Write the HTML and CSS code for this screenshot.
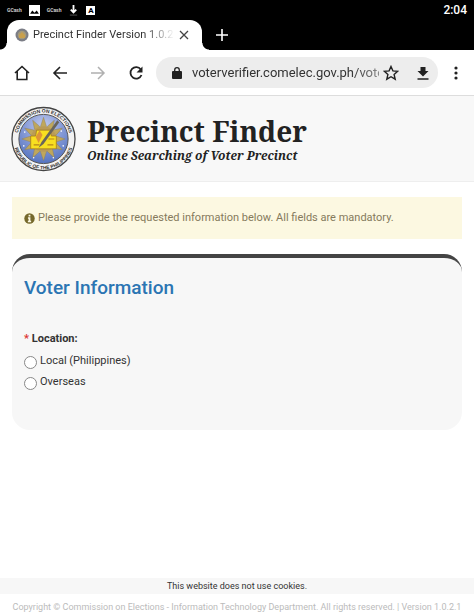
FILE: index.html
```html
<!DOCTYPE html>
<html lang="en">
<head>
<meta charset="utf-8">
<meta name="viewport" content="width=device-width, initial-scale=1">
<title>Precinct Finder Version 1.0.2.1</title>
<link rel="stylesheet" href="styles.css">
</head>
<body>
<div class="browser">
  <div class="status">
    <span class="brand">GCash</span>
    <svg class="status-icon" viewBox="0 0 10 10"><path fill="#fff" d="M0 0h10v10H0z"/><path d="M1 8l2-3 2 2 2-2 2 3z"/></svg>
    <span class="brand">GCash</span>
    <svg class="status-icon" viewBox="0 0 10 12"><path d="M5 0v7M2 5l3 3 3-3" fill="none" stroke="#fff" stroke-width="2"/><path d="M1 11h8" stroke="#555"/></svg>
    <span class="letter">A</span>
    <time class="clock">2:04</time>
  </div>
  <div class="tabs">
    <div class="tab">
      <svg class="favicon" viewBox="0 0 14 14"><circle cx="7" cy="7" r="6.5" fill="#7b7d86"/><circle cx="7" cy="7" r="4.3" fill="#a49a7c"/><path d="M4 7l3-3 3 3v3H4z" fill="#c9a04d"/></svg>
      <span class="tab-title">Precinct Finder Version 1.0.2</span>
      <button class="plain" aria-label="Close tab"><svg class="close" viewBox="0 0 10 10"><path d="M1 1l8 8M9 1L1 9" fill="none" stroke="#444" stroke-width="1.3"/></svg></button>
    </div>
    <button class="plain new-tab" aria-label="New tab"><svg class="plus" viewBox="0 0 12 12"><path d="M6 0v12M0 6h12" stroke="#fff" stroke-width="1.6"/></svg></button>
  </div>
  <div class="toolbar">
    <button class="plain" aria-label="Home"><svg class="icon" viewBox="0 0 16 16"><path d="M1 8l7-6.5L15 8M3.2 6.5v8h9.6v-8" fill="none" stroke="#222" stroke-width="1.6"/></svg></button>
    <button class="plain" aria-label="Back"><svg class="icon" viewBox="0 0 16 16"><path d="M15 8H2.5M8 2L2 8l6 6" fill="none" stroke="#222" stroke-width="1.6"/></svg></button>
    <button class="plain" aria-label="Forward" disabled><svg class="icon" viewBox="0 0 16 16"><path d="M1 8h12.5M8 2l6 6-6 6" fill="none" stroke="#b0b0b0" stroke-width="1.5"/></svg></button>
    <button class="plain" aria-label="Reload"><svg class="icon" viewBox="0 0 16 16"><path d="M12.8 4.5A5.7 5.7 0 1 0 13.5 10" fill="none" stroke="#222" stroke-width="1.8"/><path d="M14.5 1.5v6h-6z" fill="#222"/></svg></button>
    <div class="address">
      <svg class="lock" viewBox="0 0 10 12"><rect x="0" y="4" width="10" height="8" rx="1" fill="#222"/><path d="M2.7 5V3a2.300 2.300 0 0 1 4.600 0v2" fill="none" stroke="#222" stroke-width="1.300"/></svg>
      <input class="url" type="text" aria-label="Address" value="voterverifier.comelec.gov.ph/vote">
      <button class="plain" aria-label="Bookmark"><svg class="icon" viewBox="0 0 16 16"><path d="M8 1.5l1.900 4.400 4.800.4-3.600 3.200 1.100 4.700L8 11.700l-4.200 2.500 1.100-4.700L1.300 6.300l4.800-.4z" fill="none" stroke="#222" stroke-width="1.4"/></svg></button>
      <button class="plain" aria-label="Download"><svg class="icon" viewBox="0 0 16 16"><path d="M5.500 2h5v4h3L8 11.500 2.500 6h3zM2.500 13.200h11v1.500h-11z" fill="#222"/></svg></button>
    </div>
    <button class="plain" aria-label="More"><svg class="dots" viewBox="0 0 4 14"><g fill="#222"><circle cx="2" cy="2" r="1.600"/><circle cx="2" cy="7" r="1.600"/><circle cx="2" cy="12" r="1.600"/></g></svg></button>
  </div>
</div>

<header class="masthead">
  <svg class="seal" viewBox="0 0 66 66" role="img" aria-label="Commission on Elections seal">
    <defs>
      <radialGradient id="sky" cx=".5" cy=".25" r=".8">
        <stop offset="0" stop-color="#c3cdf0"/><stop offset=".5" stop-color="#8499d6"/><stop offset="1" stop-color="#4f6fbd"/>
      </radialGradient>
      <path id="arc-top" d="M10.300 47A26.700 26.700 0 1 1 55.700 47"/>
      <path id="arc-bottom" d="M3.400 25A30.700 30.700 0 1 0 62.600 25"/>
    </defs>
    <circle cx="33" cy="33" r="32" fill="#f2f2f2" stroke="#444" stroke-width="1.3"/>
    <circle cx="33" cy="33" r="25" fill="url(#sky)" stroke="#555" stroke-width="1"/>
    <g fill="#bfa75c" stroke="#85795a" stroke-width=".4">
      <g id="rays">
        <path d="M33 11l3 9-3 6-3-6zM33 55l3-9-3-6-3 6z"/>
        <path d="M11 33l9-3 6 3-6 3zM55 33l-9-3-6 3 6 3z"/>
      </g>
      <use href="#rays" transform="rotate(30 33 33)"/>
      <use href="#rays" transform="rotate(60 33 33)"/>
    </g>
    <circle cx="33" cy="33" r="13" fill="#b99b57"/>
    <path d="M20 30h5l1-6h14l1 6h5v13H20z" fill="#f8df20" stroke="#a47c1c" stroke-width=".8"/>
    <path d="M25 31l4-7 3 5-4 8z" fill="#de9437"/>
    <path d="M38 33h6M23 39h6M37 39h6" stroke="#b5841c" stroke-width="1.2"/>
    <path d="M47 14L31 36l-3 6 5-4 16-22z" fill="#68645b"/>
    <g fill="#fff"><circle cx="14" cy="26" r=".8"/><circle cx="51" cy="25" r=".8"/><circle cx="13" cy="40" r=".8"/><circle cx="53" cy="40" r=".8"/><circle cx="23" cy="52" r=".8"/><circle cx="43" cy="52" r=".8"/></g>
    <g class="seal-text">
      <text><textPath href="#arc-top" startOffset="50%" text-anchor="middle">COMMISSION ON ELECTIONS</textPath></text>
      <text><textPath href="#arc-bottom" startOffset="50%" text-anchor="middle">REPUBLIC OF THE PHILIPPINES</textPath></text>
    </g>
  </svg>
  <div>
    <h1>Precinct Finder</h1>
    <p class="tagline">Online Searching of Voter Precinct</p>
  </div>
</header>

<main>
  <p class="notice">
    <svg class="info" viewBox="0 0 12 12"><circle cx="6" cy="6" r="5.700" fill="#75682b"/><path d="M5 2h2v1.700H5zM4.300 4.700H7V8.500h.8V10H4.200V8.500H5V6.200h-.7z" fill="#fcf8e3"/></svg>
    <span>Please provide the requested information below. All fields are mandatory.</span>
  </p>
  <form class="panel">
    <h2>Voter Information</h2>
    <fieldset>
      <legend><span class="required">*</span> Location:</legend>
      <label class="choice"><input type="radio" name="location">Local (Philippines)</label>
      <label class="choice"><input type="radio" name="location">Overseas</label>
    </fieldset>
  </form>
</main>

<footer>
  <p class="cookies">This website does not use cookies.</p>
  <p class="copyright">Copyright © Commission on Elections - Information Technology Department. All rights reserved. | Version 1.0.2.1</p>
</footer>
</body>
</html>
```
FILE: styles.css
```css
* { box-sizing: border-box; }

body {
  margin: 0;
  min-height: 100vh;
  display: flex;
  flex-direction: column;
  background: #fff;
  color: #333;
  font: 11px/16px Roboto, sans-serif;
}

h1, h2, p, fieldset, legend { margin: 0; padding: 0; border: 0; }
svg { display: block; flex: none; }

.plain {
  display: flex;
  padding: 0;
  border: 0;
  background: none;
}

/* Browser chrome */
.status {
  display: flex;
  align-items: center;
  gap: 7px;
  height: 20px;
  padding: 0 7px;
  background: #000;
  color: #fff;
}
.brand { font-size: 5px; line-height: 8px; font-weight: 700; color: #ccc; }
.status-icon { width: 11px; height: 11px; }
.letter {
  width: 9px;
  background: #fff;
  color: #000;
  font-size: 8px;
  font-weight: 700;
  line-height: 9px;
  text-align: center;
}
.clock { margin-left: auto; font-size: 12px; font-weight: 500; }

.tabs {
  display: flex;
  align-items: stretch;
  height: 30px;
  padding-left: 7px;
  background: #000;
}
.tab {
  position: relative;
  display: flex;
  align-items: center;
  gap: 4px;
  width: 195px;
  padding: 0 13px 0 8px;
  border-radius: 12px 12px 0 0;
  background: #fff;
}
.tab::before, .tab::after {
  content: "";
  position: absolute;
  bottom: 0;
  width: 7px;
  height: 7px;
}
.tab::before { right: 100%; background: radial-gradient(circle at 0 0, #000 6px, #fff 7px); }
.tab::after { left: 100%; background: radial-gradient(circle at 100% 0, #000 6px, #fff 7px); }
.favicon { width: 14px; height: 14px; }
.tab-title {
  flex: 1;
  overflow: hidden;
  white-space: nowrap;
  color: #333;
  -webkit-mask-image: linear-gradient(90deg, #000 78%, transparent);
  mask-image: linear-gradient(90deg, #000 78%, transparent);
}
.close { width: 10px; height: 10px; }
.new-tab { align-items: center; margin-left: 14px; }
.plus { width: 12px; height: 12px; }

.toolbar {
  display: flex;
  align-items: center;
  gap: 22px;
  height: 46px;
  padding: 0 16px 0 14px;
  border-bottom: 1px solid #ddd;
}
.icon { width: 16px; height: 16px; }
.address {
  flex: 1;
  min-width: 0;
  display: flex;
  align-items: center;
  gap: 16px;
  height: 31px;
  margin: 0 -6px 0 -10px;
  padding: 0 7px 0 16px;
  border-radius: 16px;
  background: #ededed;
}
.lock { width: 10px; height: 12px; margin-right: -6px; }
.url {
  flex: 1;
  min-width: 0;
  padding: 0;
  border: 0;
  margin-right: -12px;
  background: none;
  color: #333;
  font: 13px/20px Roboto, sans-serif;
  -webkit-mask-image: linear-gradient(90deg, #000 85%, #0008);
  mask-image: linear-gradient(90deg, #000 85%, #0008);
}
.dots { width: 4px; height: 14px; }

/* Page */
.masthead {
  display: flex;
  align-items: center;
  gap: 11px;
  height: 86px;
  padding: 0 11px;
  border-bottom: 1px solid #eee;
  background: #f8f8f8;
  color: #222;
}
.seal { width: 65px; height: 66px; }
.seal-text { font: 700 5px "Liberation Sans", sans-serif; fill: #333; }
h1 { font: 700 28px/34px "Noto Serif", "DejaVu Serif Condensed", "DejaVu Serif", serif; }
.tagline { font: italic 700 12px/16px "Noto Serif", "DejaVu Serif Condensed", "DejaVu Serif", serif; }

main { padding: 15px 12px; }
.notice {
  display: flex;
  align-items: center;
  gap: 3px;
  min-height: 42px;
  padding: 0 12px;
  background: #fcf8e1;
  color: #857a5c;
}
.info { width: 11px; height: 11px; }

.panel {
  margin-top: 15px;
  padding: 17px 12px 36px;
  border-top: 4px solid #444;
  border-radius: 18px;
  background: #f7f7f7;
}
h2 { font-size: 19px; font-weight: 500; line-height: 26px; color: #2b75b3; }
fieldset { margin-top: 30px; }
legend { margin-bottom: 5px; font-weight: 700; }
.required { color: #d33; }
.choice { display: flex; gap: 3px; height: 21px; line-height: 18px; }
.choice input {
  appearance: none;
  width: 13px;
  height: 13px;
  margin: 4px 0 0;
  border: 1px solid #888;
  border-radius: 50%;
  background: #fff;
}
.choice input:checked { background: radial-gradient(#2b75b3 4px, #fff 4px); }

footer { margin-top: auto; text-align: center; font-size: 9px; }
.cookies { background: #f7f7f7; }
.copyright { padding: 5px 0 0; color: #bbb; }
```
